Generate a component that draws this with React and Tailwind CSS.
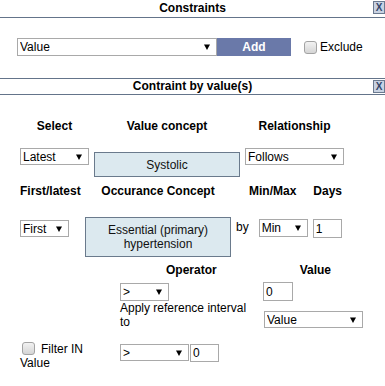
import { useState } from "react";

const font = "font-['Liberation_Sans',Arial,sans-serif]";

// header strip with the little close box on the right
function Bar({ title, className = "" }) {
  return (
    <div
      className={`relative text-center text-[12px] font-bold leading-[15px] text-black ${className}`}
    >
      {title}
      <span className="absolute right-0 top-[1px] flex h-[13px] w-[12px] items-center justify-center border border-[#6b7a90] bg-[#c8d2e2] text-[10px] font-bold leading-none text-[#34466a]">
        X
      </span>
    </div>
  );
}

function Pick({ value, options, className = "" }) {
  const [val, setVal] = useState(value);
  return (
    <span className={`relative block ${className}`}>
      <select
        value={val}
        onChange={(e) => setVal(e.target.value)}
        className="block h-full w-full appearance-none rounded-none border border-[#a9a9a9] bg-white pl-[2px] text-[12px] leading-[14px] text-black outline-none"
      >
        {options.map((o) => (
          <option key={o}>{o}</option>
        ))}
      </select>
      <svg
        width="6"
        height="6"
        viewBox="0 0 6 6"
        className="pointer-events-none absolute right-[7px] top-1/2 -translate-y-1/2"
      >
        <polygon points="0,0.5 6,0.5 3,6" fill="#000" />
      </svg>
    </span>
  );
}

function Field({ value, className = "" }) {
  return (
    <input
      defaultValue={value}
      className={`block rounded-none border border-[#a9a9a9] bg-white pl-[2px] text-[12px] text-black outline-none ${className}`}
    />
  );
}

function Check({ className = "" }) {
  const [on, setOn] = useState(false);
  return (
    <span
      onClick={() => setOn(!on)}
      className={`inline-block h-[13px] w-[13px] rounded-[3px] border border-[#a3a3a3] bg-gradient-to-b from-[#f2f2f2] to-[#d5d5d5] ${className}`}
    >
      {on && <span className="block text-center text-[10px] leading-[11px]">✓</span>}
    </span>
  );
}

function Concept({ children, className = "" }) {
  return (
    <div
      className={`flex flex-col items-center justify-center border border-[#6a7a8c] bg-[#dce9ef] text-center text-[12px] leading-[14px] text-[#111] ${className}`}
    >
      {children}
    </div>
  );
}

export default function App() {
  const ops = [">", "<", "=", ">=", "<="];
  return (
    <div className={`${font} h-[386px] w-[385px] overflow-hidden bg-white text-[12px] text-black`}>
      <Bar title="Constraints" className="h-[18px] border-b border-[#64748a] pt-[1px]" />

      {/* add constraint row */}
      <div className="flex h-[60px] items-start pl-[17px] pt-[20px]">
        <Pick value="Value" options={["Value", "Occurance", "Age"]} className="h-[18px] w-[200px]" />
        <button className="h-[18px] w-[74px] bg-[#6a79a9] text-[12px] font-bold leading-[18px] text-white">
          Add
        </button>
        <div className="ml-[13px] flex h-[18px] items-center">
          <Check />
          <span className="ml-[3px] text-[12px]">Exclude</span>
        </div>
      </div>

      <Bar title="Contraint by value(s)" className="h-[17px] border-y border-[#64748a]" />

      {/* first block */}
      <div className="mt-[24px] flex pl-[20px] font-bold leading-[14px]">
        <span className="w-[69px] text-center">Select</span>
        <span className="ml-[5px] w-[146px] text-center">Value concept</span>
        <span className="ml-[5px] w-[99px] text-center">Relationship</span>
      </div>
      <div className="mt-[15px] flex items-start pl-[20px]">
        <Pick value="Latest" options={["Latest", "First"]} className="h-[17px] w-[69px]" />
        <Concept className="ml-[5px] mt-[4px] h-[25px] w-[146px]">Systolic</Concept>
        <Pick value="Follows" options={["Follows", "Precedes"]} className="ml-[5px] h-[17px] w-[99px]" />
      </div>

      <div className="mt-[7px] flex pl-[20px] font-bold leading-[14px]">
        <span className="w-[65px]">First/latest</span>
        <span className="w-[146px] text-center">Occurance Concept</span>
        <span className="ml-[18px]">Min/Max</span>
        <span className="ml-[17px]">Days</span>
      </div>
      <div className="mt-[19px] flex items-start pl-[20px]">
        <Pick value="First" options={["First", "Latest"]} className="mt-[3px] h-[17px] w-[49px]" />
        <Concept className="ml-[16px] h-[40px] w-[146px]">
          <span>Essential (primary)</span>
          <span>hypertension</span>
        </Concept>
        <span className="ml-[5px] mt-[3px] leading-[14px]">by</span>
        <Pick value="Min" options={["Min", "Max"]} className="ml-[10px] mt-[2px] h-[18px] w-[49px]" />
        <Field value="1" className="ml-[5px] mt-[2px] h-[19px] w-[29px]" />
      </div>

      {/* operator / value */}
      <div className="mt-[6px] flex pl-[166px] font-bold leading-[14px]">
        <span>Operator</span>
        <span className="ml-[83px]">Value</span>
      </div>
      <div className="mt-[5px] flex items-start pl-[120px]">
        <div className="w-[143px]">
          <Pick value=">" options={ops} className="mt-[1px] h-[18px] w-[49px]" />
        </div>
        <Field value="0" className="h-[19px] w-[30px]" />
      </div>
      <div className="flex items-start pl-[120px]">
        <div className="w-[144px]">
          <p className="w-[132px] leading-[14px]">Apply reference interval to</p>
        </div>
        <Pick value="Value" options={["Value", "Reference"]} className="mt-[10px] h-[17px] w-[99px]" />
      </div>

      {/* filter */}
      <div className="mt-[13px] flex items-start pl-[20px]">
        <p className="w-[75px] leading-[14px]">
          <Check className="ml-[2px] mr-[6px] align-[-2px]" />
          Filter IN Value
        </p>
        <Pick value=">" options={ops} className="ml-[25px] mt-[2px] h-[17px] w-[69px]" />
        <Field value="0" className="ml-[1px] mt-[2px] h-[18px] w-[29px]" />
      </div>
    </div>
  );
}
